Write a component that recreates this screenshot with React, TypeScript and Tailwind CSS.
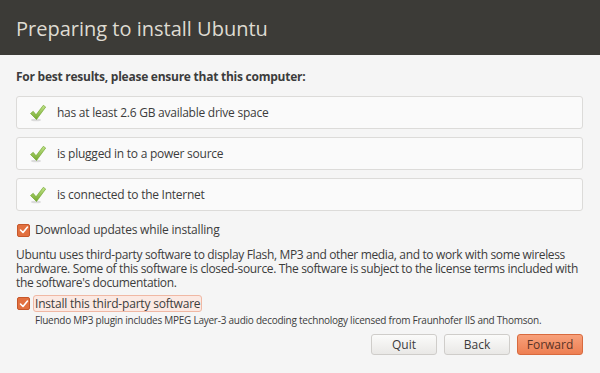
const Tick = () => (
  <svg width="18" height="18" viewBox="0 0 18 18" className="shrink-0">
    <defs>
      <linearGradient id="tk" x1="0" y1="0" x2="0" y2="1">
        <stop offset="0" stopColor="#c2e48a" />
        <stop offset="1" stopColor="#73a82c" />
      </linearGradient>
    </defs>
    <ellipse cx="7" cy="16" rx="5" ry="1.3" fill="#000" opacity="0.12" />
    <path d="M1.5 9.5 L4.2 7.3 L7 10.8 L14.3 1.3 L16.7 3 L7.5 15.5 Z" fill="url(#tk)" stroke="#669f22" strokeWidth="0.6" strokeLinejoin="round" />
  </svg>
);

const CheckBox = () => (
  <span className="flex h-[13px] w-[13px] shrink-0 items-center justify-center rounded-[2px] border border-[#c6572a] bg-[#e2703f]">
    <svg width="10" height="10" viewBox="0 0 10 10">
      <path d="M1.5 5 L4 7.5 L8.5 2" fill="none" stroke="#fff" strokeWidth="1.6" strokeLinecap="round" strokeLinejoin="round" />
    </svg>
  </span>
);

const Requirement = ({ text }: { text: string }) => (
  <div className="flex h-[33px] items-center gap-[10px] rounded-[3px] border border-[#dcdbd9] bg-[#fafafa] pl-[12px] text-[12px] tracking-[-0.25px] text-[#3c3c3c]">
    <Tick />
    <span>{text}</span>
  </div>
);

const Button = ({ label, primary }: { label: string; primary?: boolean }) => (
  <button
    className={
      primary
        ? 'h-[21px] w-[66px] rounded-[3px] border border-[#d86a3e] bg-gradient-to-b from-[#f7a07a] to-[#ee7f52] text-[12px] text-[#5a3326]'
        : 'h-[21px] w-[66px] rounded-[3px] border border-[#cfcdca] bg-gradient-to-b from-[#fbfbfa] to-[#e9e8e6] text-[12px] text-[#3c3c3c]'
    }
  >
    {label}
  </button>
);

export default function App() {
  return (
    <div className="flex h-[373px] w-[600px] flex-col bg-[#f5f5f5] font-['Open_Sans',sans-serif] text-[#3c3c3c]">
      <div className="flex h-[55px] items-center bg-[#3c3b37] pl-[16px] pt-[2px] text-[20px] text-[#dfdbd2]">
        Preparing to install Ubuntu
      </div>
      <div className="flex flex-1 flex-col px-[16px] pt-[14px]">
        <div className="text-[12px] font-bold leading-[16px] tracking-[-0.25px] text-[#3c3c3c]">For best results, please ensure that this computer:</div>
        <div className="mt-[11px] flex w-[567px] flex-col gap-[8px]">
          <Requirement text="has at least 2.6 GB available drive space" />
          <Requirement text="is plugged in to a power source" />
          <Requirement text="is connected to the Internet" />
        </div>
        <label className="mt-[10px] flex items-center gap-[5px] pl-[1px] text-[12px] tracking-[-0.2px]">
          <CheckBox />
          <span>Download updates while installing</span>
        </label>
        <p className="mt-[9px] text-[12px] leading-[14px] tracking-[-0.35px]">
          Ubuntu uses third-party software to display Flash, MP3 and other media, and to work with some wireless hardware. Some of this software is closed-source. The software is subject to the license terms included with the software's documentation.
        </p>
        <label className="mt-[5px] flex items-center gap-[3px] pl-[1px] text-[12px] tracking-[-0.2px]">
          <CheckBox />
          <span className="rounded-[3px] border border-[#f0b8a4] bg-[#fbe9e3] px-[1px] leading-[15px]">Install this third-party software</span>
        </label>
        <div className="mt-[2px] pl-[19px] text-[10px] leading-[13px] tracking-[-0.25px]">
          Fluendo MP3 plugin includes MPEG Layer-3 audio decoding technology licensed from Fraunhofer IIS and Thomson.
        </div>
        <div className="mt-[7px] flex w-[567px] justify-end gap-[7px]">
          <Button label="Quit" />
          <Button label="Back" />
          <Button label="Forward" primary />
        </div>
      </div>
    </div>
  );
}
